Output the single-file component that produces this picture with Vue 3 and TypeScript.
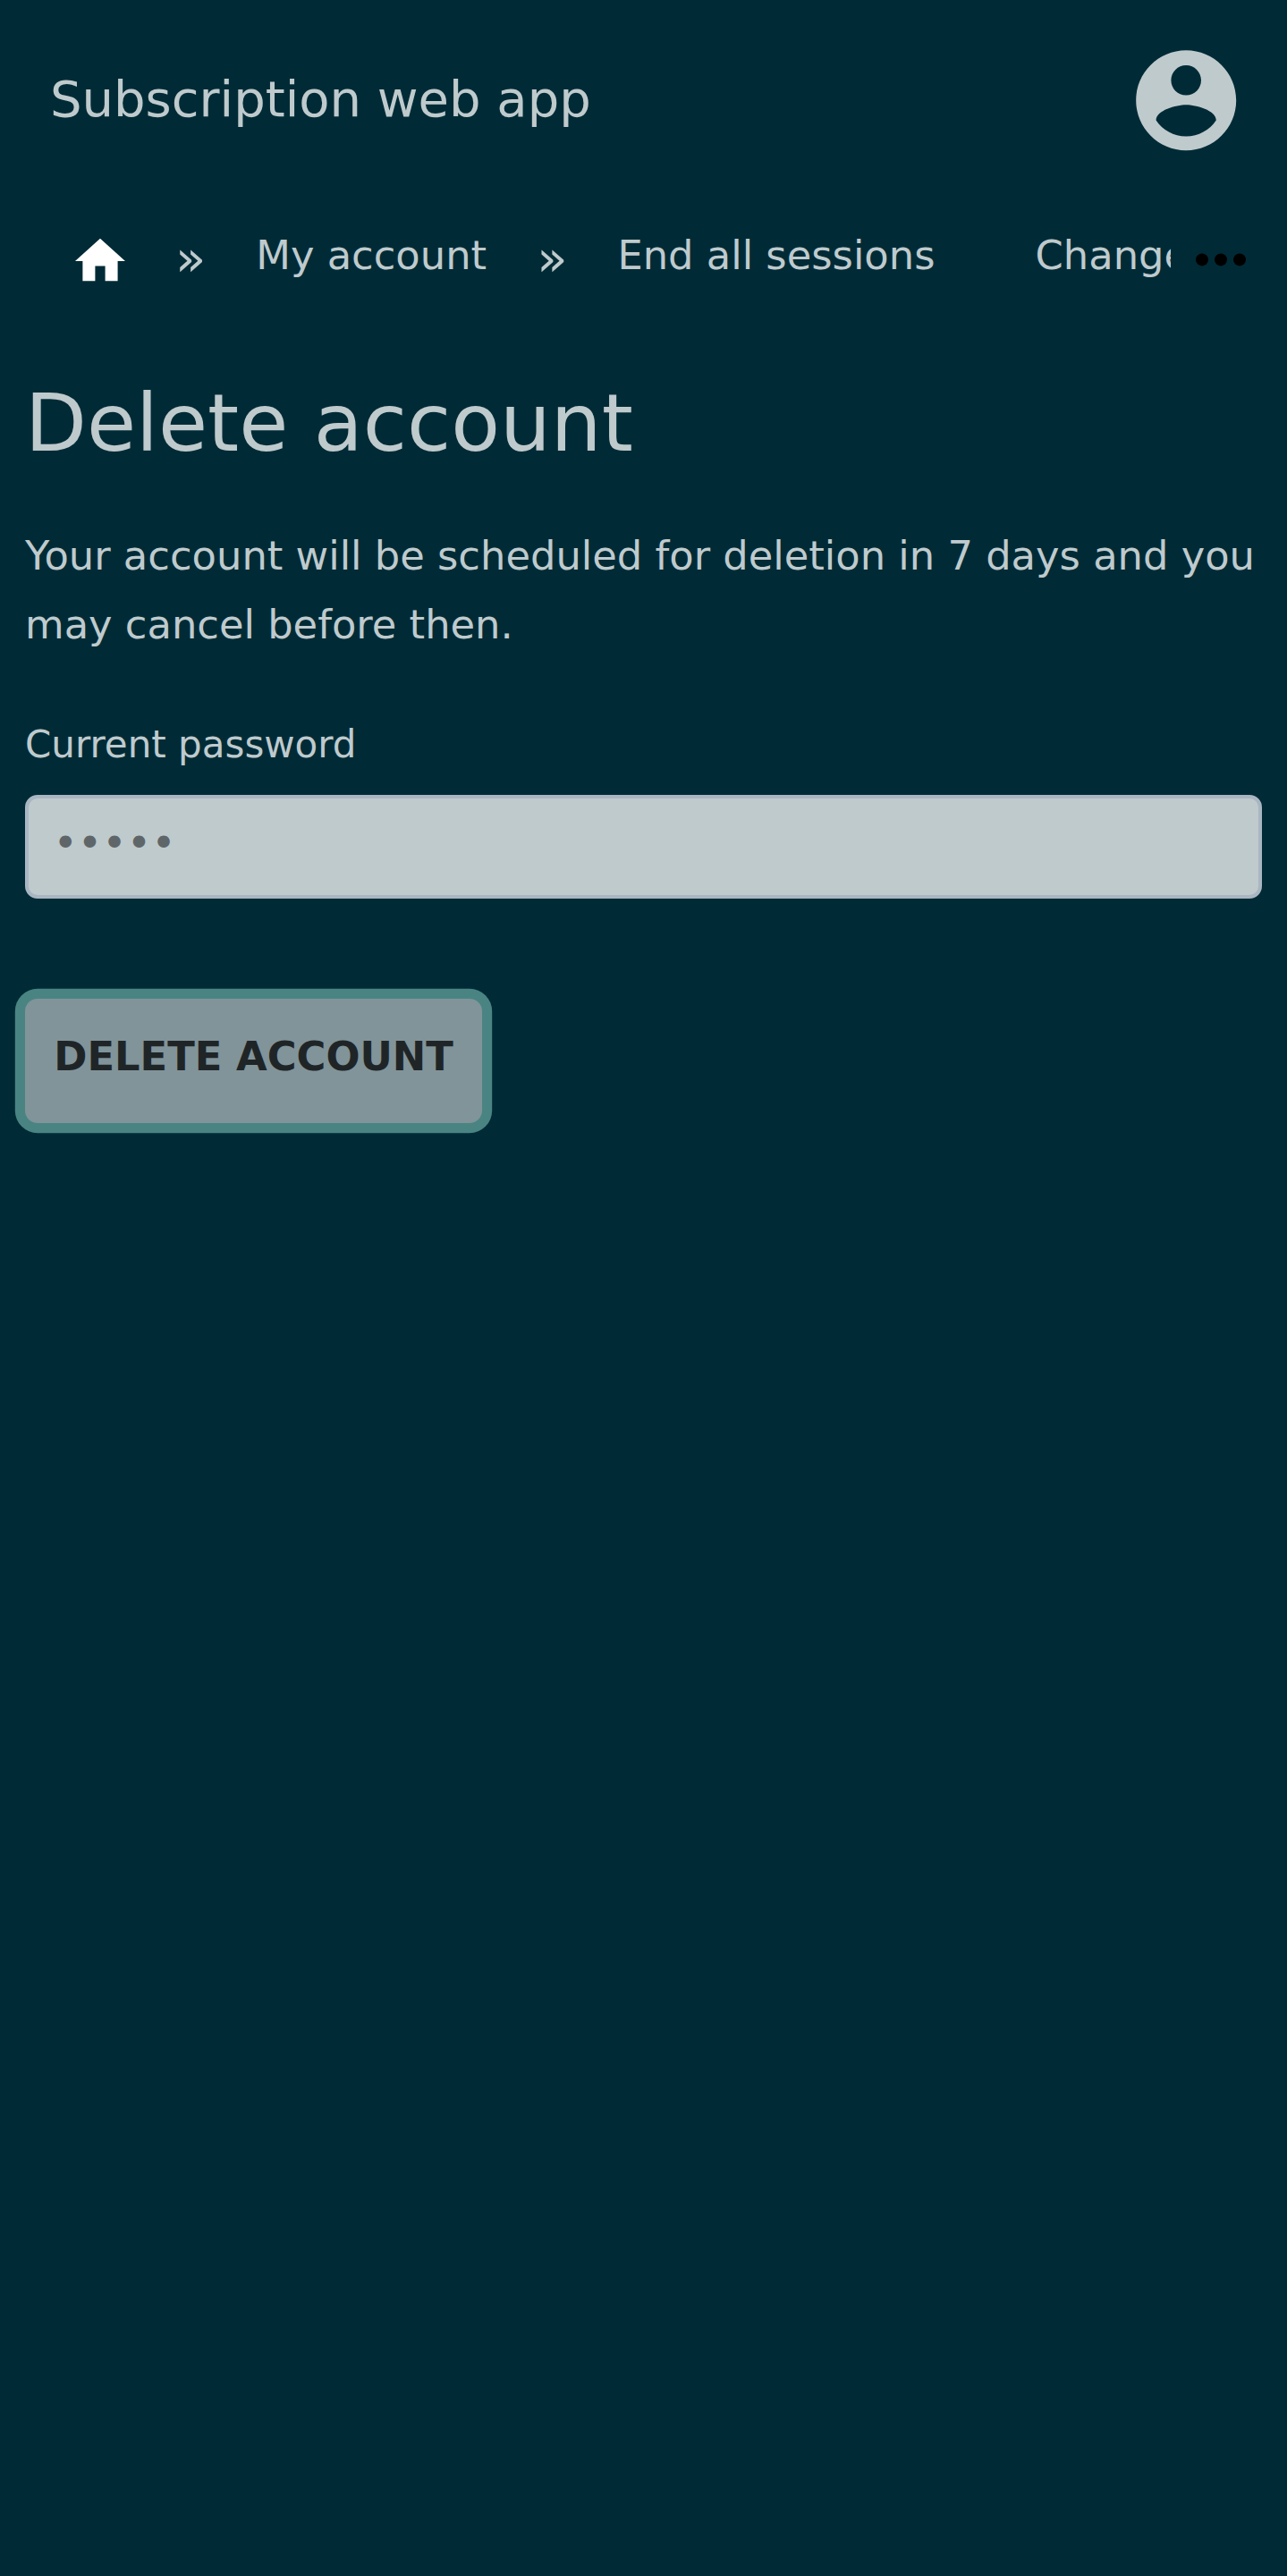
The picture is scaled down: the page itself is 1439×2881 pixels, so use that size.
<script setup lang="ts">
interface Crumb {
  label: string
  separated: boolean
}

const crumbs: Crumb[] = [
  { label: 'My account', separated: true },
  { label: 'End all sessions', separated: true },
  { label: 'Change password', separated: false },
]
</script>

<template>
  <div class="page">
    <header class="header">
      <span class="brand">Subscription web app</span>
      <svg class="avatar" viewBox="0 0 24 24" aria-hidden="true">
        <path
          d="M12 2C6.48 2 2 6.48 2 12s4.48 10 10 10 10-4.48 10-10S17.52 2 12 2zm0 3c1.66 0 3 1.34 3 3s-1.34 3-3 3-3-1.34-3-3 1.34-3 3-3zm0 14.2c-2.5 0-4.71-1.28-6-3.22.03-1.99 4-3.08 6-3.08 1.99 0 5.97 1.09 6 3.08-1.29 1.94-3.5 3.22-6 3.22z"
        />
      </svg>
    </header>

    <nav class="nav">
      <div class="crumbs">
        <svg class="home" viewBox="0 0 24 24" aria-hidden="true">
          <path d="M10 20v-6h4v6h5v-8h3L12 3 2 12h3v8z" />
        </svg>
        <template v-for="crumb in crumbs" :key="crumb.label">
          <span v-if="crumb.separated" class="separator">»</span>
          <a class="crumb" :class="{ plain: !crumb.separated }">{{ crumb.label }}</a>
        </template>
      </div>
      <svg class="more" viewBox="0 0 24 24" aria-hidden="true">
        <circle cx="6" cy="12" r="2" />
        <circle cx="12" cy="12" r="2" />
        <circle cx="18" cy="12" r="2" />
      </svg>
    </nav>

    <main class="content">
      <h1 class="title">Delete account</h1>
      <p class="notice">
        Your account will be scheduled for deletion in 7 days and you may cancel before then.
      </p>
      <label class="label" for="password">Current password</label>
      <input id="password" class="field" type="password" placeholder="•••••" />
      <button class="submit" type="button">DELETE ACCOUNT</button>
    </main>
  </div>
</template>

<style>
body {
  margin: 0;
  background: #002b36;
}
</style>

<style scoped>
.page {
  box-sizing: border-box;
  min-height: 2881px;
  background: #002b36;
  color: #bfcacd;
  font-family: "DejaVu Sans", sans-serif;
  font-size: 44.8px;
}

.header {
  display: flex;
  align-items: center;
  justify-content: space-between;
  height: 224px;
  padding: 0 45.6px 0 56px;
}

.brand {
  margin-bottom: 3px;
  font-size: 56px;
  line-height: 70px;
}

.avatar {
  width: 134.4px;
  height: 134.4px;
  fill: currentColor;
}

.nav {
  display: flex;
  height: 134px;
  padding-right: 32px;
}

.crumbs {
  display: flex;
  width: 1309px;
  padding-left: 78px;
  box-sizing: border-box;
  overflow: hidden;
  white-space: nowrap;
}

.home {
  flex: none;
  width: 67.2px;
  height: 67.2px;
  margin: 34px 50.8px 0 0;
  fill: #fff;
  transform: translate(0.4px, 0.3px);
}

.separator {
  margin-right: 56px;
  font-size: 56px;
  line-height: 130px;
}

.crumb {
  margin-right: 56px;
  line-height: 123px;
}

.crumb.plain {
  margin-left: 56px;
}

.more {
  flex: none;
  width: 84px;
  height: 84px;
  margin: 24px 0 0 14px;
  transform: translateY(0.4px);
}

.content {
  display: flex;
  flex-direction: column;
  align-items: flex-start;
  padding: 0 28px;
}

.title {
  margin: 56px 0 51px;
  font-size: 89.6px;
  font-weight: 400;
  line-height: 118px;
}

.notice {
  margin: 0;
  line-height: 77px;
}

.label {
  margin-top: 61px;
  font-size: 42px;
  line-height: 69px;
}

.field {
  box-sizing: border-box;
  width: 1383px;
  height: 115.6px;
  margin: 22px 0 0;
  padding: 0 27.4px 8px;
  border: 4px solid #a9b6c2;
  border-radius: 14px;
  background: #bfcacc;
  font-family: inherit;
  font-size: 46.6px;
  outline: none;
}

.field::placeholder {
  color: #5f6669;
  opacity: 1;
}

.submit {
  box-sizing: border-box;
  width: 511.2px;
  height: 139.6px;
  margin-top: 112px;
  padding: 0 0 10px;
  border: 0;
  border-radius: 14px;
  background: #81949a;
  box-shadow: 0 0 0 11.2px #498483;
  color: #1f2527;
  font-family: inherit;
  font-size: 44.8px;
  font-weight: 700;
  white-space: nowrap;
}
</style>
